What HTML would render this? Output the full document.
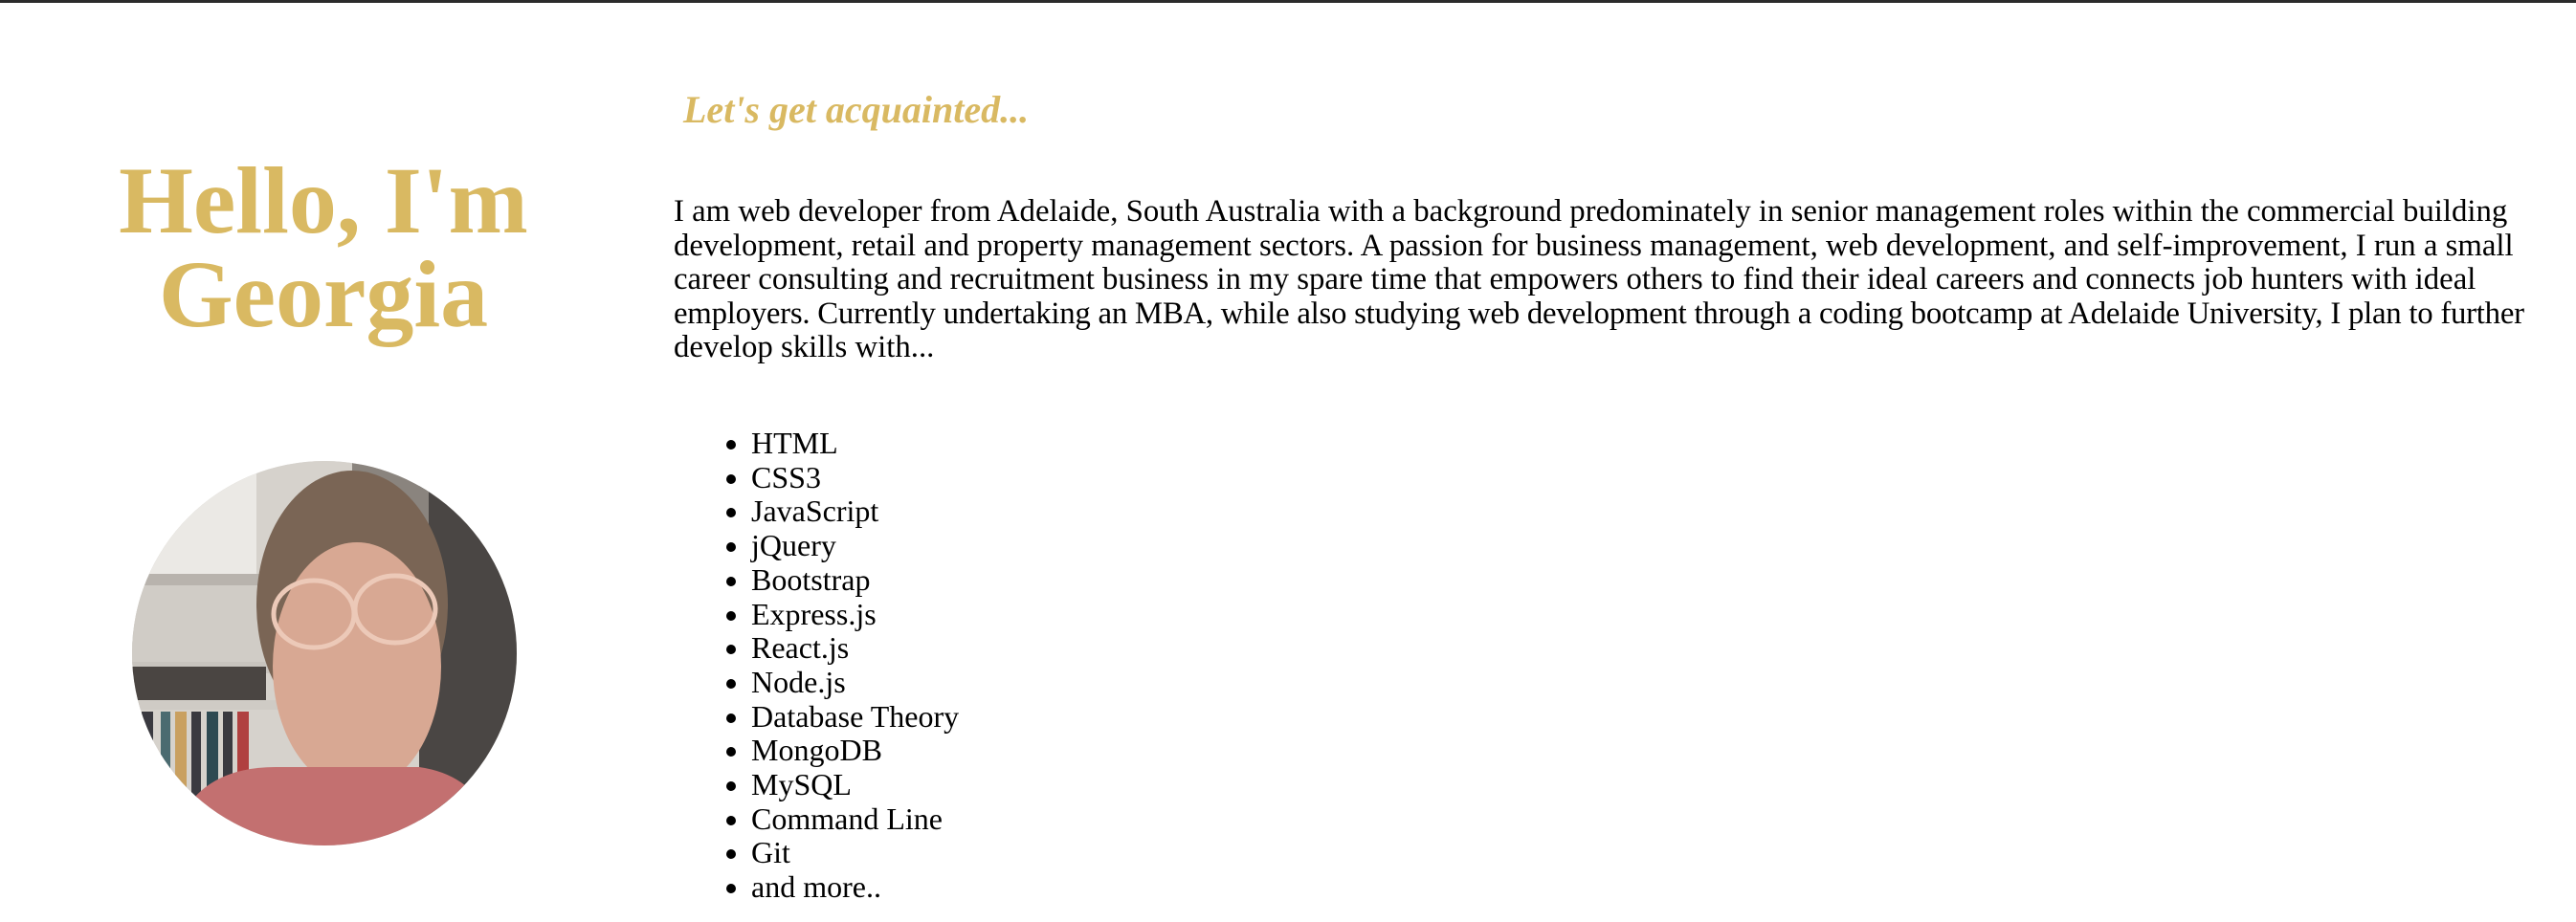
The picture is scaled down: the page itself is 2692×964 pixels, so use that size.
<!DOCTYPE html>
<html><head><meta charset="utf-8"><style>
html,body{margin:0;padding:0;background:#fff;}
body{width:2692px;height:964px;position:relative;overflow:hidden;font-family:"Liberation Serif",serif;border-top:3px solid #2b2b2b;box-sizing:border-box;}
.h1{position:absolute;left:0;width:676px;top:158px;text-align:center;color:#d9b962;font-weight:bold;font-size:100px;line-height:98px;}
.sub{position:absolute;left:714px;top:88px;color:#d9b962;font-weight:bold;font-style:italic;font-size:40px;}
.p{position:absolute;left:704px;top:201px;width:1980px;font-size:32.8px;line-height:35.6px;color:#000;white-space:nowrap;}
.p span{display:inline-block;}
ul{position:absolute;left:704px;top:443px;margin:0;padding-left:81px;font-size:32px;line-height:35.7px;}
.photo{position:absolute;left:138px;top:479px;width:402px;height:402px;border-radius:50%;overflow:hidden;
background:#d8d6d2;}
</style></head><body>
<div class="h1">Hello, I'm<br>Georgia</div>
<div class="sub">Let's get acquainted...</div>
<div class="p">I am web developer from Adelaide, South Australia with a background predominately in senior management roles within the commercial building<br>development, retail and property management sectors. A passion for business management, web development, and self-improvement, I run a small<br>career consulting and recruitment business in my spare time that empowers others to find their ideal careers and connects job hunters with ideal<br><span style="letter-spacing:-0.25px">employers. Currently undertaking an MBA, while also studying web development through a coding bootcamp at Adelaide University, I plan to further</span><br>develop skills with...</div>
<ul><li>HTML</li><li>CSS3</li><li>JavaScript</li><li>jQuery</li><li>Bootstrap</li><li>Express.js</li><li>React.js</li><li>Node.js</li><li>Database Theory</li><li>MongoDB</li><li>MySQL</li><li>Command Line</li><li>Git</li><li>and more..</li></ul>
<div class="photo">
<svg width="402" height="402" viewBox="0 0 402 402">
<rect x="0" y="0" width="402" height="402" fill="#d6d2cc"/>
<rect x="0" y="0" width="130" height="120" fill="#ebe9e5"/>
<rect x="0" y="118" width="150" height="12" fill="#b8b3ad"/>
<rect x="0" y="130" width="150" height="80" fill="#d0ccc6"/>
<rect x="0" y="210" width="150" height="12" fill="#c8c4be"/>
<rect x="0" y="215" width="140" height="35" fill="#4a4542"/>
<rect x="0" y="250" width="160" height="10" fill="#cfcbc5"/>
<g><rect x="10" y="262" width="12" height="90" fill="#3a3a40"/><rect x="30" y="262" width="10" height="90" fill="#4b6b70"/><rect x="45" y="262" width="12" height="90" fill="#c9a060"/><rect x="62" y="262" width="10" height="90" fill="#3a3a40"/><rect x="78" y="262" width="12" height="90" fill="#2e4a52"/><rect x="95" y="262" width="10" height="90" fill="#3a3a40"/><rect x="110" y="262" width="12" height="90" fill="#b04040"/></g>
<rect x="300" y="0" width="102" height="402" fill="#4a4644"/>
<rect x="230" y="0" width="80" height="150" fill="#8a847e"/>
<ellipse cx="230" cy="150" rx="100" ry="140" fill="#7a6555"/>
<ellipse cx="235" cy="215" rx="88" ry="130" fill="#d8a893"/>
<ellipse cx="190" cy="160" rx="42" ry="35" fill="none" stroke="#ecc9b8" stroke-width="5"/>
<ellipse cx="275" cy="155" rx="42" ry="35" fill="none" stroke="#ecc9b8" stroke-width="5"/>
<path d="M40 402 Q60 320 150 320 L300 320 Q370 330 380 402 Z" fill="#c37070"/>
</svg>
</div>
</body></html>
